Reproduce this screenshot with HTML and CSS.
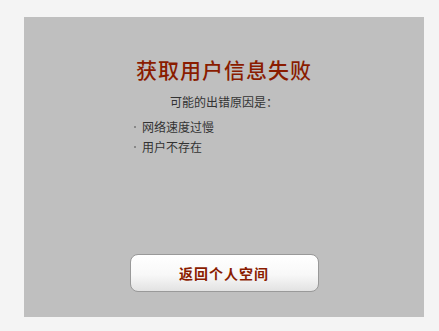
FILE: index.html
```html
<!DOCTYPE html>
<html lang="zh-CN">
<head>
<meta charset="utf-8">
<title>获取用户信息失败</title>
<link rel="stylesheet" href="styles.css">
</head>
<body>
<div class="panel">
  <h1 class="title">获取用户信息失败</h1>
  <p class="reason">可能的出错原因是：</p>
  <ul class="causes">
    <li>网络速度过慢</li>
    <li>用户不存在</li>
  </ul>
  <a class="back-btn" href="#">返回个人空间</a>
</div>
</body>
</html>
```
FILE: styles.css
```css
html, body {
  margin: 0;
  padding: 0;
}
body {
  background: #f4f4f4;
  font-family: "Noto Sans CJK SC", "Liberation Sans", sans-serif;
  width: 439px;
  height: 331px;
  overflow: hidden;
}
.panel {
  box-sizing: border-box;
  margin: 17px 0 0 24px;
  width: 400px;
  height: 300px;
  background: #bfbfbf;
  display: flex;
  flex-direction: column;
  align-items: center;
  padding: 39px 0 25px;
}
.title {
  margin: 0;
  font-size: 21px;
  line-height: 26px;
  font-weight: 500;
  letter-spacing: 1px;
  color: #8a1c00;
}
.reason {
  margin: 10px 0 0;
  font-size: 12px;
  line-height: 20px;
  color: #333;
}
.causes {
  align-self: flex-start;
  list-style: none;
  margin: 5px 0 0 110px;
  padding: 0;
}
.causes li {
  display: flex;
  align-items: center;
  font-size: 12px;
  line-height: 20px;
  color: #333;
}
.causes li::before {
  content: "";
  width: 2px;
  height: 2px;
  background: #888;
  margin-right: 6px;
}
.back-btn {
  margin-top: auto;
  box-sizing: border-box;
  width: 189px;
  height: 38px;
  border: 1px solid #999;
  border-radius: 8px;
  background: linear-gradient(to bottom, #ffffff 0%, #f8f8f8 55%, #e2e2e2 100%);
  display: flex;
  align-items: center;
  justify-content: center;
  font-size: 14px;
  font-weight: bold;
  letter-spacing: 1px;
  color: #8a1c00;
  text-decoration: none;
}
```
